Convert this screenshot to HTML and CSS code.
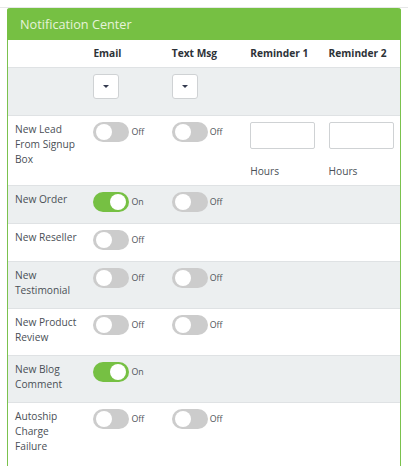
FILE: index.html
```html
<!DOCTYPE html>
<html>
<head>
<meta charset="utf-8">
<link rel="stylesheet" href="styles.css">
</head>
<body>
<div class="page">
  <div class="panel">
    <div class="panel-head">Notification Center</div>
    <table class="grid">
      <colgroup><col><col><col><col><col></colgroup>
      <thead>
        <tr><th></th><th>Email</th><th>Text Msg</th><th>Reminder 1</th><th>Reminder 2</th></tr>
      </thead>
      <tbody>
        <tr class="alt">
          <td></td>
          <td><span class="dd"><span class="caret"></span></span></td>
          <td><span class="dd"><span class="caret"></span></span></td>
          <td></td><td></td>
        </tr>
        <tr>
          <td class="lbl">New Lead From Signup Box</td>
          <td><div class="tg"><span class="sw"><span class="knob"></span></span><span class="st">Off</span></div></td>
          <td><div class="tg"><span class="sw"><span class="knob"></span></span><span class="st">Off</span></div></td>
          <td class="rem"><div class="box"></div><div class="hrs">Hours</div></td>
          <td class="rem"><div class="box"></div><div class="hrs">Hours</div></td>
        </tr>
        <tr class="alt">
          <td class="lbl">New Order</td>
          <td><div class="tg"><span class="sw on"><span class="knob"></span></span><span class="st">On</span></div></td>
          <td><div class="tg"><span class="sw"><span class="knob"></span></span><span class="st">Off</span></div></td>
          <td></td><td></td>
        </tr>
        <tr>
          <td class="lbl">New Reseller</td>
          <td><div class="tg"><span class="sw"><span class="knob"></span></span><span class="st">Off</span></div></td>
          <td></td><td></td><td></td>
        </tr>
        <tr class="alt">
          <td class="lbl">New Testimonial</td>
          <td><div class="tg"><span class="sw"><span class="knob"></span></span><span class="st">Off</span></div></td>
          <td><div class="tg"><span class="sw"><span class="knob"></span></span><span class="st">Off</span></div></td>
          <td></td><td></td>
        </tr>
        <tr>
          <td class="lbl">New Product Review</td>
          <td><div class="tg"><span class="sw"><span class="knob"></span></span><span class="st">Off</span></div></td>
          <td><div class="tg"><span class="sw"><span class="knob"></span></span><span class="st">Off</span></div></td>
          <td></td><td></td>
        </tr>
        <tr class="alt">
          <td class="lbl">New Blog Comment</td>
          <td><div class="tg"><span class="sw on"><span class="knob"></span></span><span class="st">On</span></div></td>
          <td></td><td></td><td></td>
        </tr>
        <tr>
          <td class="lbl">Autoship Charge Failure</td>
          <td><div class="tg"><span class="sw"><span class="knob"></span></span><span class="st">Off</span></div></td>
          <td><div class="tg"><span class="sw"><span class="knob"></span></span><span class="st">Off</span></div></td>
          <td></td><td></td>
        </tr>
      </tbody>
    </table>
  </div>
</div>
</body>
</html>
```
FILE: styles.css
```css
html, body {
  margin: 0;
  padding: 0;
  background: #ffffff;
}
body {
  font-family: "Open Sans", "DejaVu Sans", sans-serif;
  color: #4a4f56;
}
.page {
  margin-top: 7px;
  border-top: 1px solid #e6e7e8;
}
.panel {
  margin-left: 7px;
  width: 392px;
  border: 1px solid #7bc24e;
  border-top: none;
  border-radius: 3px 3px 0 0;
  padding-bottom: 20px;
}
.panel-head {
  background: #76c043;
  color: #e6f3da;
  font-size: 12.7px;
  height: 32px;
  line-height: 32px;
  padding-left: 13px;
  border-radius: 3px 3px 0 0;
  margin: 0 -1px;
}
.grid {
  width: 392px;
  table-layout: fixed;
  border-collapse: collapse;
}
.grid col { width: 78.4px; }
.grid th {
  font-size: 10.2px;
  font-weight: 700;
  color: #2d3238;
  text-align: left;
  line-height: 15px;
  padding: 6px 7px;
  white-space: nowrap;
}
.grid td {
  border-top: 1px solid #dfe2e4;
  padding: 6px 7px 10px;
  vertical-align: top;
  font-size: 10.2px;
  line-height: 15px;
}
.grid tr.alt td { background: #eceff0; }
.dd {
  display: flex;
  align-items: center;
  justify-content: center;
  width: 24px;
  height: 23px;
  border: 1px solid #cfd2d4;
  border-radius: 3px;
  background: #fff;
  margin-bottom: 6px;
}
.caret {
  width: 0;
  height: 0;
  border-left: 3.5px solid transparent;
  border-right: 3.5px solid transparent;
  border-top: 3.5px solid #343a4f;
}
.tg {
  display: flex;
  align-items: flex-start;
  height: 21px;
}
.sw {
  position: relative;
  width: 36px;
  height: 20px;
  border-radius: 10px;
  background: #cccccc;
  flex: none;
}
.sw.on { background: #76c043; }
.knob {
  position: absolute;
  top: 2px;
  left: 3px;
  width: 16px;
  height: 16px;
  border-radius: 50%;
  background: #ffffff;
}
.sw.on .knob { left: 17px; }
.st {
  font-size: 8.8px;
  line-height: 20px;
  color: #4f545a;
  margin-left: 2px;
}
.grid td.rem { padding-bottom: 6px; }
.box {
  width: 63px;
  height: 25px;
  border: 1px solid #cfd2d4;
  border-radius: 2px;
  background: #fff;
}
.hrs {
  margin-top: 15px;
  line-height: 15px;
}
```
